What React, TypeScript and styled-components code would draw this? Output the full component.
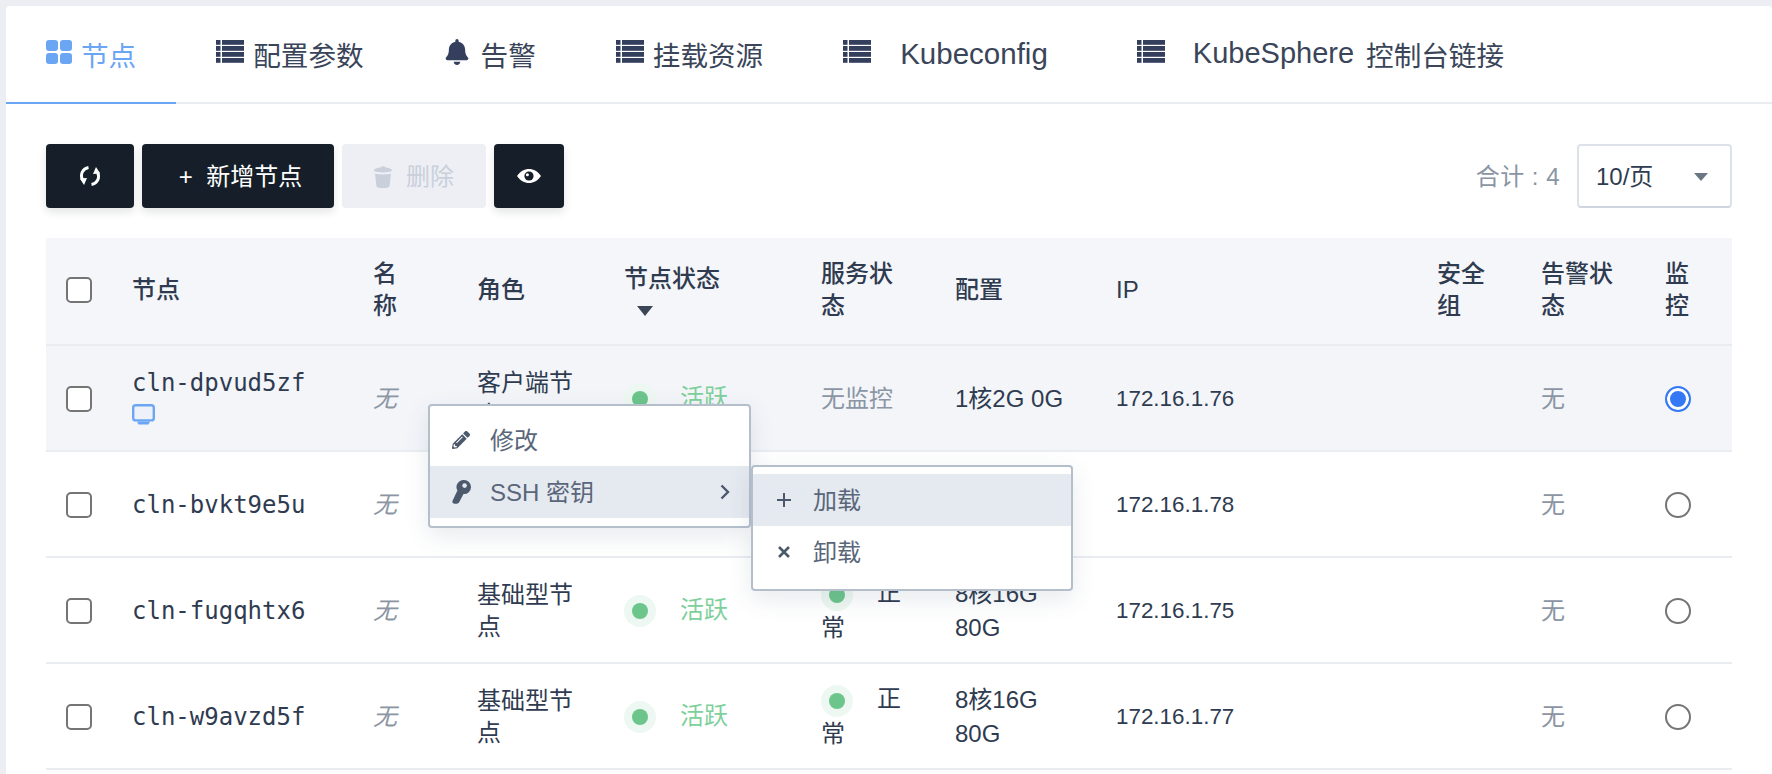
import React from 'react';
import styled, { createGlobalStyle } from 'styled-components';
import { FaBell, FaPencilAlt } from 'react-icons/fa';

const GlobalStyle = createGlobalStyle`
  html, body {
    margin: 0;
    height: 100%;
    overflow: hidden;
    background-color: #eceef4;
    font-family: 'Liberation Sans', 'Noto Sans CJK SC', sans-serif;
    color: #2f3b50;
  }
  * {
    box-sizing: border-box;
  }
`;

const Panel = styled.div`
  position: relative;
  margin: 6px 0 0 6px;
  height: 768px;
  background-color: #fff;
  border-radius: 4px 4px 0 0;
  overflow: hidden;
`;
const TabBar = styled.div`
  display: flex;
  height: 98px;
  border-bottom: 2px solid #e9edf2;
`;
const Tab = styled.div<{ $active?: boolean; $trail?: number }>`
  display: flex;
  align-items: center;
  height: 98px;
  padding: 0 ${(p) => 40 + (p.$trail ?? 0)}px 1px 40px;
  font-size: 27.6px;
  color: ${(p) => (p.$active ? '#6ba6f5' : '#3a4559')};
  border-bottom: 2px solid ${(p) => (p.$active ? '#6ba6f5' : 'transparent')};
  white-space: pre;
`;
const TabIcon = styled.span<{ $gap: number }>`
  display: flex;
  margin-right: ${(p) => p.$gap}px;
  margin-top: -4px;
`;
const TabLatin = styled.span<{ $size: number; $after?: number }>`
  margin-right: ${(p) => p.$after ?? 0}px;
  font-size: ${(p) => p.$size}px;
`;
const Content = styled.div`
  padding: 40px 40px 0;
`;
const Toolbar = styled.div`
  display: flex;
  justify-content: space-between;
  height: 64px;
`;
const ButtonGroup = styled.div`
  display: flex;
  gap: 8px;
`;
const Button = styled.div<{ $width: number; $disabled?: boolean }>`
  display: flex;
  align-items: center;
  justify-content: center;
  gap: 9px;
  width: ${(p) => p.$width}px;
  height: 64px;
  border-radius: 4px;
  font-size: 24px;
  color: ${(p) => (p.$disabled ? '#c9d0db' : '#fff')};
  background-color: ${(p) => (p.$disabled ? '#edeff4' : '#161f29')};
  box-shadow: ${(p) => (p.$disabled ? 'none' : '0 4px 8px rgba(22, 31, 41, 0.12)')};
`;
const ButtonLabel = styled.span`
  margin: 0 0 4px 5px;
`;
const Pager = styled.div`
  display: flex;
  align-items: center;
  gap: 17px;
`;
const Total = styled.span`
  margin-bottom: 4px;
  font-size: 24px;
  letter-spacing: 0.5px;
  color: #8b95a3;
`;
const PageSelect = styled.div`
  display: flex;
  align-items: center;
  justify-content: space-between;
  width: 155px;
  height: 64px;
  padding: 0 22px 0 17px;
  font-size: 24px;
  border: 2px solid #dde2ea;
  border-bottom-color: #cfd6e0;
  border-radius: 4px;
`;
const PageLabel = styled.span`
  margin-bottom: 4px;
`;
const Caret = styled.span`
  width: 0;
  height: 0;
  margin-top: 2px;
  border-left: 7px solid transparent;
  border-right: 7px solid transparent;
  border-top: 8px solid #6b7683;
`;
const Table = styled.table`
  width: 1686px;
  margin-top: 30px;
  table-layout: fixed;
  border-collapse: separate;
  border-spacing: 0;
`;
const Th = styled.th`
  height: 108px;
  padding: 0 40px 3px 0;
  font-size: 24px;
  font-weight: 500;
  line-height: 32px;
  text-align: left;
  color: #2f3b50;
  background-color: #f5f6fa;
  border-bottom: 2px solid #e9edf2;
`;
const Row = styled.tr<{ $hover?: boolean }>`
  background-color: ${(p) => (p.$hover ? '#f3f5f9' : '#fff')};
`;
const Td = styled.td<{ $muted?: boolean; $italic?: boolean; $latin?: boolean; $tall?: boolean }>`
  height: 106px;
  padding: 1px 40px 0 0;
  font-size: ${(p) => (p.$latin ? '22.4px' : '24px')};
  line-height: ${(p) => (p.$tall ? '34px' : '32px')};
  color: ${(p) => (p.$muted ? '#8b95a3' : '#2f3b50')};
  font-style: ${(p) => (p.$italic ? 'italic' : 'normal')};
  border-bottom: 2px solid #e9edf2;
`;
const CheckCell = styled.div`
  display: flex;
  padding-left: 20px;
`;
const CheckBox = styled.input`
  appearance: none;
  width: 26px;
  height: 26px;
  margin: 0;
  background-color: #fff;
  border: 2px solid #757575;
  border-radius: 5px;
`;
const Radio = styled.input`
  appearance: none;
  display: block;
  width: 26px;
  height: 26px;
  margin: 1px 0 0;
  background-color: #fff;
  border: 2px solid #757575;
  border-radius: 50%;
  &:checked {
    border-color: #3578f6;
    background-color: #3578f6;
    box-shadow: inset 0 0 0 3px #fff;
  }
`;
const NodeId = styled.div`
  font-family: 'DejaVu Sans Mono', 'Liberation Mono', monospace;
  font-size: 24px;
  line-height: 32px;
`;
const NodeIcon = styled.div`
  display: flex;
  align-items: center;
  height: 32px;
`;
const Narrow = styled.span`
  display: block;
  width: 30px;
`;
const SortArrow = styled.span`
  display: block;
  width: 0;
  margin: 11px 0 0 13px;
  border-left: 8px solid transparent;
  border-right: 8px solid transparent;
  border-top: 10px solid #3a4557;
`;
const Dot = styled.span`
  display: inline-flex;
  align-items: center;
  justify-content: center;
  width: 32px;
  height: 32px;
  margin-right: 24px;
  vertical-align: middle;
  background-color: #eef8f2;
  border-radius: 50%;
  &::after {
    content: '';
    width: 16px;
    height: 16px;
    background-color: #6cc58b;
    border-radius: 50%;
  }
`;
const Active = styled.span`
  color: #7ed09b;
`;
const Menu = styled.div`
  position: absolute;
  left: 422px;
  top: 398px;
  width: 323px;
  padding: 8px 0;
  background-color: #fff;
  border: 2px solid #b5bfcc;
  border-radius: 4px;
  box-shadow: 0 8px 24px rgba(60, 80, 110, 0.12);
`;
const SubMenu = styled(Menu)`
  left: calc(100% + 2px);
  top: -1px;
  width: 322px;
  padding: 7px 0 11px;
`;
const MenuItem = styled.div<{ $hover?: boolean; $indent?: number }>`
  position: relative;
  display: flex;
  align-items: center;
  height: 52px;
  padding-left: ${(p) => p.$indent ?? 22}px;
  font-size: 24px;
  color: #5a6679;
  background-color: ${(p) => (p.$hover ? '#e5e9f0' : 'transparent')};
`;
const MenuLabel = styled.span`
  margin-bottom: 4px;
`;
const MenuIcon = styled.span<{ $width: number }>`
  display: flex;
  width: ${(p) => p.$width}px;
  color: #4c586b;
`;
const Chevron = styled.span`
  position: absolute;
  right: 19px;
  display: flex;
`;

const GridIcon = () => (
  <svg width="26" height="24" viewBox="0 0 26 24" fill="currentColor">
    <rect x="0" y="0" width="12" height="11" rx="3" />
    <rect x="14" y="0" width="12" height="11" rx="3" />
    <rect x="0" y="13" width="12" height="11" rx="3" />
    <rect x="14" y="13" width="12" height="11" rx="3" />
  </svg>
);
const ListIcon = () => (
  <svg width="28" height="23" viewBox="0 0 28 23" fill="#333f5c">
    {[0, 6, 12, 18].map((y) => (
      <g key={y}>
        <rect x="0" y={y} width="4.5" height="4.8" />
        <rect x="6" y={y} width="22" height="4.8" />
      </g>
    ))}
  </svg>
);
const RefreshIcon = () => (
  <svg width="22" height="20" viewBox="0 0 22 20" fill="none" stroke="#fff" strokeWidth="3">
    <path d="M9.5 1.6C4 2.5 0.6 8 3.6 14" />
    <path d="M12.5 18.4C18 17.5 21.4 12 18.4 6" />
    <path d="M0.8 12.6L8 12L5 19Z" fill="#fff" stroke="none" />
    <path d="M21.2 7.4L14 8L17 1Z" fill="#fff" stroke="none" />
  </svg>
);
const TrashIcon = () => (
  <svg width="18" height="23" viewBox="0 0 18 23" fill="#c9d0db">
    <path d="M0 5.5C0 3.6 4 2.6 6.6 2.4C7 0.8 11 0.8 11.4 2.4C14 2.6 18 3.6 18 5.5C18 6.6 14 7.4 9 7.4C4 7.4 0 6.6 0 5.5Z" />
    <path d="M1 8.6C5 9.8 13 9.8 17 8.6L15.6 21C15.4 22.4 13 23 9 23C5 23 2.6 22.4 2.4 21Z" />
  </svg>
);
const EyeIcon = () => (
  <svg width="24" height="14" viewBox="0 0 24 14">
    <path d="M0 7C3 2.4 7.4 0 12 0C16.6 0 21 2.4 24 7C21 11.6 16.6 14 12 14C7.4 14 3 11.6 0 7Z" fill="#fff" />
    <circle cx="12" cy="7" r="4.6" fill="#161f29" />
    <circle cx="10.4" cy="5.8" r="1.5" fill="#fff" />
  </svg>
);
const MonitorIcon = () => (
  <svg width="23" height="21" viewBox="0 0 23 21">
    <rect x="1.2" y="1.2" width="20.6" height="15.2" rx="2.5" fill="#eef2f8" stroke="#6ba6f5" strokeWidth="2.4" />
    <path d="M5 17.5H18L16.5 20.5H6.5Z" fill="#6ba6f5" />
  </svg>
);
const KeyIcon = () => (
  <svg width="19" height="24" viewBox="0 0 19 24" fill="#4c586b">
    <path d="M12 0A7 7 0 0 1 19 7A7 7 0 0 1 11.5 14L7 22.4C6 24.2 1.6 24.2 0.6 22.8C0.2 22 0.4 21 0.8 20.2L5.4 10.4A7 7 0 0 1 12 0Z" />
    <circle cx="12.6" cy="5.6" r="2.3" fill="#e5e9f0" />
  </svg>
);
const ChevronIcon = () => (
  <svg width="10" height="16" viewBox="0 0 10 16" fill="none" stroke="#4c586b" strokeWidth="2.4">
    <path d="M1.5 1.5L8 8L1.5 14.5" />
  </svg>
);
const PlusIcon = () => (
  <svg width="14" height="14" viewBox="0 0 14 14" fill="none" stroke="#4c586b" strokeWidth="2">
    <path d="M7 0V14M0 7H14" />
  </svg>
);
const CrossIcon = () => (
  <svg width="12" height="12" viewBox="0 0 12 12" fill="none" stroke="#4c586b" strokeWidth="2.6">
    <path d="M1 1L11 11M11 1L1 11" />
  </svg>
);

const columnWidths = [86, 241, 104, 147, 197, 134, 161, 321, 104, 124, 67];

const tabs = [
  { key: 'nodes', label: <>节点</>, icon: <GridIcon />, gap: 9, active: true },
  { key: 'params', label: <>配置参数</>, icon: <ListIcon />, gap: 9 },
  { key: 'alarm', label: <>告警</>, icon: <FaBell size={26} color="#333f5c" />, gap: 11 },
  { key: 'mounts', label: <>挂载资源</>, icon: <ListIcon />, gap: 9 },
  { key: 'kubeconfig', label: <TabLatin $size={29.5}>Kubeconfig</TabLatin>, icon: <ListIcon />, gap: 29, trail: 9 },
  {
    key: 'kubesphere',
    label: (
      <>
        <TabLatin $size={29} $after={12}>
          KubeSphere
        </TabLatin>
        控制台链接
      </>
    ),
    icon: <ListIcon />,
    gap: 28,
  },
];

const nodes = [
  { id: 'cln-dpvud5zf', role: '客户端节点', config: '1核2G 0G', ip: '172.16.1.76', client: true },
  { id: 'cln-bvkt9e5u', role: '主节点', config: '8核16G 80G', ip: '172.16.1.78' },
  { id: 'cln-fugqhtx6', role: '基础型节点', config: '8核16G 80G', ip: '172.16.1.75' },
  { id: 'cln-w9avzd5f', role: '基础型节点', config: '8核16G 80G', ip: '172.16.1.77' },
];

const App: React.FC = () => {
  return (
    <>
      <GlobalStyle />
      <Panel>
        <TabBar>
          {tabs.map((t) => (
            <Tab key={t.key} $active={t.active} $trail={t.trail}>
              <TabIcon $gap={t.gap}>{t.icon}</TabIcon>
              {t.label}
            </Tab>
          ))}
        </TabBar>
        <Content>
          <Toolbar>
            <ButtonGroup>
              <Button $width={88}>
                <RefreshIcon />
              </Button>
              <Button $width={192}>
                <ButtonLabel>+ &nbsp;新增节点</ButtonLabel>
              </Button>
              <Button $width={144} $disabled>
                <TrashIcon />
                <ButtonLabel>删除</ButtonLabel>
              </Button>
              <Button $width={70}>
                <EyeIcon />
              </Button>
            </ButtonGroup>
            <Pager>
              <Total>合计 : 4</Total>
              <PageSelect>
                <PageLabel>10/页</PageLabel>
                <Caret />
              </PageSelect>
            </Pager>
          </Toolbar>
          <Table>
            <colgroup>
              {columnWidths.map((w, i) => (
                <col key={i} width={w} />
              ))}
            </colgroup>
            <thead>
              <tr>
                <Th>
                  <CheckCell>
                    <CheckBox type="checkbox" readOnly />
                  </CheckCell>
                </Th>
                <Th>节点</Th>
                <Th>
                  <Narrow>名称</Narrow>
                </Th>
                <Th>角色</Th>
                <Th>
                  节点状态
                  <SortArrow />
                </Th>
                <Th>服务状态</Th>
                <Th>配置</Th>
                <Th>IP</Th>
                <Th>安全组</Th>
                <Th>告警状态</Th>
                <Th>监控</Th>
              </tr>
            </thead>
            <tbody>
              {nodes.map((n) => (
                <Row key={n.id} $hover={n.client}>
                  <Td>
                    <CheckCell>
                      <CheckBox type="checkbox" readOnly />
                    </CheckCell>
                  </Td>
                  <Td>
                    <NodeId>{n.id}</NodeId>
                    {n.client && (
                      <NodeIcon>
                        <MonitorIcon />
                      </NodeIcon>
                    )}
                  </Td>
                  <Td $muted $italic>
                    无
                  </Td>
                  <Td>{n.role}</Td>
                  <Td>
                    <Dot />
                    <Active>活跃</Active>
                  </Td>
                  {n.client ? (
                    <Td $muted>无监控</Td>
                  ) : (
                    <Td $tall>
                      <Dot />
                      正常
                    </Td>
                  )}
                  <Td $tall>{n.config}</Td>
                  <Td $latin>{n.ip}</Td>
                  <Td />
                  <Td $muted>无</Td>
                  <Td>
                    <Radio type="radio" checked={!!n.client} readOnly />
                  </Td>
                </Row>
              ))}
            </tbody>
          </Table>
        </Content>
        <Menu>
          <MenuItem>
            <MenuIcon $width={38}>
              <FaPencilAlt size={18} />
            </MenuIcon>
            <MenuLabel>修改</MenuLabel>
          </MenuItem>
          <MenuItem $hover>
            <MenuIcon $width={38}>
              <KeyIcon />
            </MenuIcon>
            <MenuLabel>SSH 密钥</MenuLabel>
            <Chevron>
              <ChevronIcon />
            </Chevron>
            <SubMenu>
              <MenuItem $hover $indent={24}>
                <MenuIcon $width={36}>
                  <PlusIcon />
                </MenuIcon>
                <MenuLabel>加载</MenuLabel>
              </MenuItem>
              <MenuItem $indent={25}>
                <MenuIcon $width={35}>
                  <CrossIcon />
                </MenuIcon>
                <MenuLabel>卸载</MenuLabel>
              </MenuItem>
            </SubMenu>
          </MenuItem>
        </Menu>
      </Panel>
    </>
  );
};

export default App;
